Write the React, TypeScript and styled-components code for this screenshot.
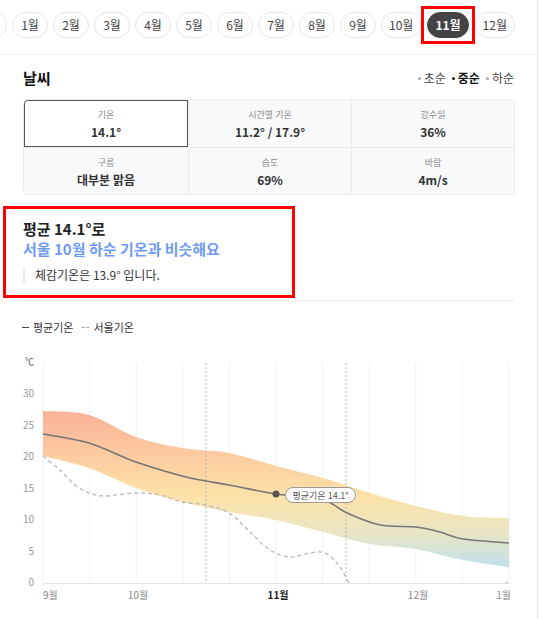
import React from "react"
import styled, { createGlobalStyle } from "styled-components"

const GlobalStyle = createGlobalStyle`
  body {
    margin: 0;
    background: #fff;
    font-family: "Noto Sans CJK KR", "Noto Sans", sans-serif;
    color: #222;
  }
`

const Page = styled.div`
  width: 537px;
  min-height: 619px;
  border-right: 1px solid #e8e8e8;
  overflow: hidden;
`

const MonthBar = styled.nav`
  padding: 12px 0 16px;
  border-bottom: 1px solid #eee;
  overflow: hidden;
`

const MonthList = styled.div`
  display: flex;
  gap: 5px;
  margin-left: -29px;
`

const MonthChip = styled.span<{ $active?: boolean }>`
  position: relative;
  flex: none;
  box-sizing: border-box;
  min-width: 36px;
  height: 26px;
  padding: 0 7px;
  border: 1px solid ${(p) => (p.$active ? "#444" : "#e6e6e6")};
  border-radius: 13px;
  background: ${(p) => (p.$active ? "#444" : "#fff")};
  color: ${(p) => (p.$active ? "#fff" : "#444")};
  font-size: 12px;
  font-weight: ${(p) => (p.$active ? 700 : 400)};
  line-height: 24px;
  text-align: center;
  ${(p) => (p.$active ? "margin: 0 1px;" : "")}

  ${(p) =>
    p.$active &&
    `
    &::after {
      content: "";
      position: absolute;
      inset: -7px;
      border: 3px solid #f00;
    }
  `}
`

const Section = styled.section`
  padding: 0 22px 0 23px;
`

const Header = styled.div`
  display: flex;
  justify-content: space-between;
  align-items: center;
  margin-top: 13px;
  height: 20px;
`

const Title = styled.h2`
  margin: 0;
  font-size: 15px;
  font-weight: 700;
  line-height: 20px;
  color: #111;
`

const Periods = styled.div`
  display: flex;
  gap: 6px;
  font-size: 12px;
  line-height: 16px;
  margin-right: 1px;
`

const Period = styled.span<{ $active?: boolean }>`
  display: flex;
  align-items: center;
  gap: 3px;
  color: ${(p) => (p.$active ? "#111" : "#444")};
  font-weight: ${(p) => (p.$active ? 700 : 400)};
  &::before {
    content: "";
    width: 3px;
    height: 3px;
    border-radius: 50%;
    background: ${(p) => (p.$active ? "#222" : "#aaa")};
  }
`

const StatGrid = styled.div`
  display: grid;
  grid-template-columns: 164px 163px 1fr;
  margin-top: 11px;
  border: 1px solid #eceef1;
  border-radius: 5px;
  background: #f8f9fb;
  overflow: hidden;
`

const StatCell = styled.div<{ $active?: boolean; $col: number; $row: number }>`
  box-sizing: border-box;
  height: 47px;
  padding-top: 9px;
  text-align: center;
  border-left: ${(p) => (p.$col > 0 ? "1px solid #e9ecef" : "none")};
  border-top: ${(p) => (p.$row > 0 ? "1px solid #e9ecef" : "none")};
  ${(p) =>
    p.$active
      ? "background: #fff; box-shadow: inset 0 0 0 1px #555; border-top-left-radius: 4px;"
      : ""}
`

const StatLabel = styled.div`
  font-size: 9px;
  line-height: 12px;
  color: #8a8a8a;
`

const StatValue = styled.div`
  margin-top: 3px;
  font-size: 12px;
  line-height: 16px;
  font-weight: 600;
  color: #333;
`

const Summary = styled.div`
  box-sizing: border-box;
  width: 292px;
  margin: 11px 0 0 -20px;
  padding: 10px 0 12px 17px;
  border: 3px solid #f00;
`

const Lead = styled.p<{ $accent?: boolean }>`
  margin: 0;
  font-size: 15px;
  line-height: 20px;
  font-weight: 700;
  color: ${(p) => (p.$accent ? "#6f9bf4" : "#222")};
`

const Note = styled.p`
  margin: 8px 0 0;
  padding-left: 10px;
  border-left: 2px solid #eee;
  font-size: 12px;
  line-height: 16px;
  color: #333;
`

const Divider = styled.hr`
  margin: 2px 0 0;
  border: 0;
  border-top: 1px solid #eee;
`

const Legend = styled.div`
  display: flex;
  gap: 9px;
  margin-top: 19px;
  margin-left: -1px;
  font-size: 11px;
  line-height: 14px;
  color: #333;
`

const LegendItem = styled.span<{ $dashed?: boolean }>`
  display: flex;
  align-items: center;
  gap: 4px;
  &::before {
    content: "";
    width: 7px;
    border-top: 1px ${(p) => (p.$dashed ? "dashed #999" : "solid #444")};
  }
`

const ChartBox = styled.svg`
  display: block;
  margin-top: 16px;
`

const months = ["", "1월", "2월", "3월", "4월", "5월", "6월", "7월", "8월", "9월", "10월", "11월", "12월"]

const stats = [
  { label: "기온", value: "14.1°" },
  { label: "시간별 기온", value: "11.2° / 17.9°" },
  { label: "강수일", value: "36%" },
  { label: "구름", value: "대부분 맑음" },
  { label: "습도", value: "69%" },
  { label: "바람", value: "4m/s" },
]

type Pt = [number, number]

const smooth = (pts: Pt[], move = true) => {
  let d = `${move ? "M" : "L"}${pts[0][0]},${pts[0][1]}`
  for (let i = 0; i < pts.length - 1; i++) {
    const p0 = pts[i - 1] || pts[i]
    const p1 = pts[i]
    const p2 = pts[i + 1]
    const p3 = pts[i + 2] || p2
    const c1x = p1[0] + (p2[0] - p0[0]) / 6
    const c1y = p1[1] + (p2[1] - p0[1]) / 6
    const c2x = p2[0] - (p3[0] - p1[0]) / 6
    const c2y = p2[1] - (p3[1] - p1[1]) / 6
    d += ` C${c1x.toFixed(1)},${c1y.toFixed(1)} ${c2x.toFixed(1)},${c2y.toFixed(1)} ${p2[0]},${p2[1]}`
  }
  return d
}

const upper: Pt[] = [
  [43, 411], [89, 415], [136, 437], [182, 448], [229, 453], [276, 466],
  [323, 478], [370, 493], [416, 506], [463, 516], [509, 518],
]
const lower: Pt[] = [
  [43, 456], [89, 468], [136, 488], [182, 502], [229, 512], [276, 520],
  [323, 532], [370, 544], [416, 549], [463, 560], [509, 567],
]
const mean: Pt[] = [
  [43, 434], [89, 443], [136, 462], [182, 476], [206, 481], [229, 485],
  [276, 494], [323, 500], [347, 513], [380, 525], [416, 527], [440, 532],
  [463, 539], [509, 543],
]
const seoul: Pt[] = [
  [43, 456], [60, 470], [75, 485], [89, 493], [105, 496], [136, 493],
  [160, 495], [182, 502], [206, 505], [229, 513], [250, 532], [270, 550],
  [290, 557], [310, 553], [325, 553], [340, 567], [352, 590],
]

const bandPath = smooth(upper) + " L509,567 " + smooth([...lower].reverse(), false) + " Z"

const yTicks = [30, 25, 20, 15, 10, 5, 0]
const toY = (v: number) => 582.5 - v * 6.3
const gridX = Array.from({ length: 11 }, (_, i) => 43 + i * 46.6)

const xLabels = [
  { x: 43, text: "9월", anchor: "start" },
  { x: 138, text: "10월", anchor: "middle" },
  { x: 278, text: "11월", anchor: "middle", bold: true },
  { x: 418, text: "12월", anchor: "middle" },
  { x: 511, text: "1월", anchor: "end" },
]

const TempChart = () => (
  <ChartBox width={537} height={267} viewBox="0 350 537 267">
    <defs>
      <linearGradient id="band" x1="0" y1="410" x2="0" y2="570" gradientUnits="userSpaceOnUse">
        <stop offset="0" stopColor="#f9a68b" />
        <stop offset="0.3" stopColor="#fcc694" />
        <stop offset="0.55" stopColor="#fddf9e" />
        <stop offset="0.78" stopColor="#e3e2bf" />
        <stop offset="1" stopColor="#b4dbef" />
      </linearGradient>
      <clipPath id="plot">
        <rect x="43" y="360" width="467" height="223" />
      </clipPath>
    </defs>

    <text x="34" y="365" textAnchor="end" fontSize="9" fill="#555">℃</text>
    {yTicks.map((v) => (
      <text key={v} x="34" y={toY(v) + 3.5} textAnchor="end" fontSize="10" fill="#999">
        {v}
      </text>
    ))}

    {gridX.map((x) => (
      <line key={x} x1={x} y1="363" x2={x} y2="583" stroke="#f1f1f1" />
    ))}
    <line x1="43" y1="583.5" x2="510" y2="583.5" stroke="#e6e6e6" />

    <path d={bandPath} fill="url(#band)" opacity="0.88" />

    <line x1="206" y1="363" x2="206" y2="583" stroke="#b5b5b5" strokeDasharray="2 2" />
    <line x1="346" y1="363" x2="346" y2="583" stroke="#b5b5b5" strokeDasharray="2 2" />

    <g clipPath="url(#plot)">
      <path d={smooth(seoul)} fill="none" stroke="#b8b8b8" strokeWidth="1.3" strokeDasharray="4 3" />
      <path d="M498,588 Q505,583 510,581" fill="none" stroke="#b8b8b8" strokeWidth="1.3" strokeDasharray="4 3" />
    </g>

    <path d={smooth(mean)} fill="none" stroke="#767676" strokeWidth="1.6" />

    <circle cx="276" cy="494" r="3.5" fill="#555" />
    <rect x="285.5" y="487.5" width="70" height="15" rx="7.5" fill="#fff" stroke="#999" />
    <text x="320.5" y="498.5" textAnchor="middle" fontSize="9" fill="#555">평균기온 14.1°</text>

    {xLabels.map((l) => (
      <text
        key={l.text}
        x={l.x}
        y="599"
        textAnchor={l.anchor as "start" | "middle" | "end"}
        fontSize="10"
        fontWeight={l.bold ? 700 : 400}
        fill={l.bold ? "#222" : "#888"}
      >
        {l.text}
      </text>
    ))}
  </ChartBox>
)

export default function App() {
  return (
    <Page>
      <GlobalStyle />
      <MonthBar>
        <MonthList>
          {months.map((m, i) => (
            <MonthChip key={i} $active={i === 11}>
              {m}
            </MonthChip>
          ))}
        </MonthList>
      </MonthBar>

      <Section>
        <Header>
          <Title>날씨</Title>
          <Periods>
            <Period>초순</Period>
            <Period $active>중순</Period>
            <Period>하순</Period>
          </Periods>
        </Header>

        <StatGrid>
          {stats.map((s, i) => (
            <StatCell key={s.label} $col={i % 3} $row={Math.floor(i / 3)} $active={i === 0}>
              <StatLabel>{s.label}</StatLabel>
              <StatValue>{s.value}</StatValue>
            </StatCell>
          ))}
        </StatGrid>

        <Summary>
          <Lead>평균 14.1°로</Lead>
          <Lead $accent>서울 10월 하순 기온과 비슷해요</Lead>
          <Note>체감기온은 13.9° 입니다.</Note>
        </Summary>

        <Divider />

        <Legend>
          <LegendItem>평균기온</LegendItem>
          <LegendItem $dashed>서울기온</LegendItem>
        </Legend>
      </Section>

      <TempChart />
    </Page>
  )
}
